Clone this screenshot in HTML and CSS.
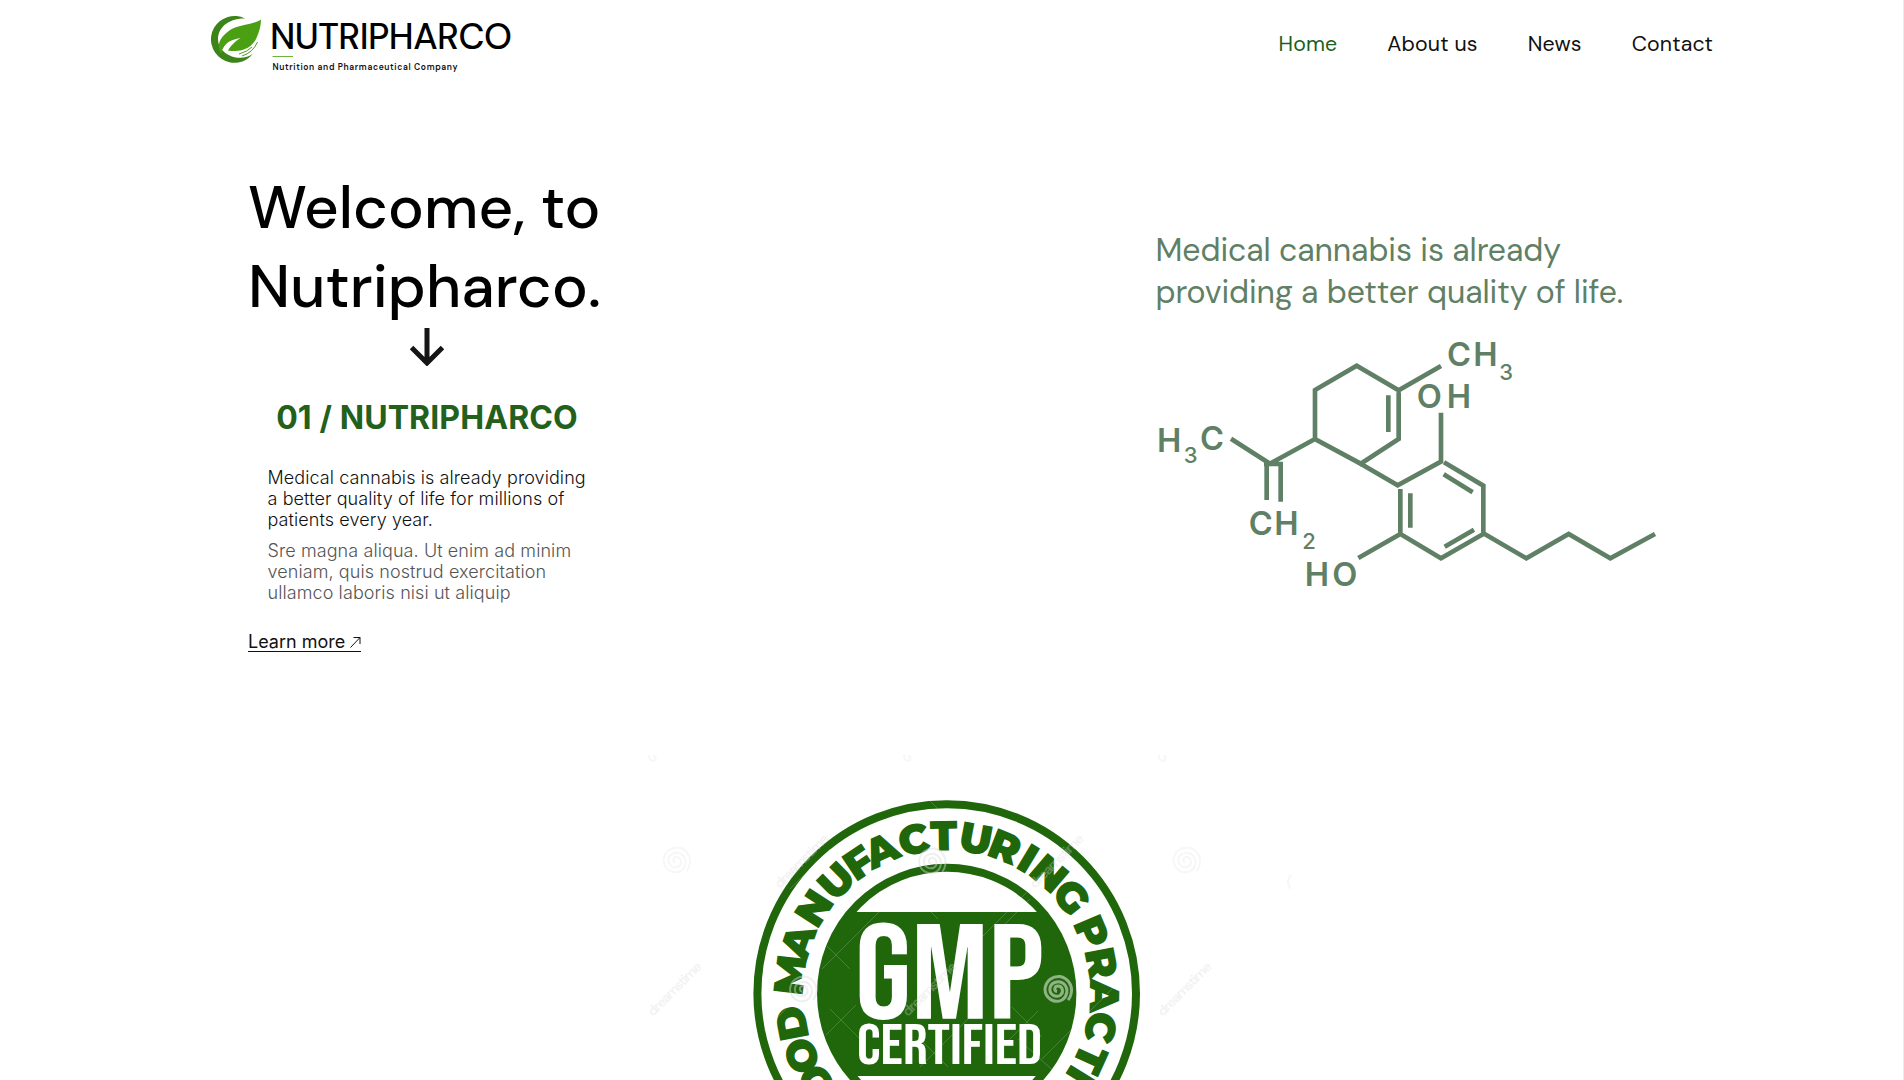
FILE: index.html
```html
<!DOCTYPE html>
<html lang="en">
<head>
<meta charset="utf-8">
<title>Nutripharco</title>
<link rel="stylesheet" href="styles.css">
</head>
<body>
<header class="header">
  <svg class="logo" width="320" height="66" viewBox="0 0 320 66" role="img" aria-label="Nutripharco">
    <path fill="#3c8419" d="M37 8.500A23.400 23.400 0 1 0 45 43.500C36 51 20 48.500 12.500 38C5 25 15 8 37 8.500Z"/>
    <path fill="#4aa012" d="M53 9.500C45.500 15 28.500 14 19.500 22C10.500 29 9 36 13 44C15 36 19 30 32.500 28C27.500 31 22.500 36 20 40.500C34.500 43 44.500 37 48.500 28C51.500 21 53 15 53 9.500Z"/>
    <path class="swoosh" d="M34 46Q45 42.500 49.500 32M31 44Q39 42 44 37"/>
    <text class="logo-name" x="62" y="38.700" textLength="242">NUTRIPHARCO</text>
    <path stroke="#6cb33f" d="M64.500 46.500H85"/>
    <text class="logo-tag" x="64.500" y="59.700" textLength="185">Nutrition and Pharmaceutical Company</text>
  </svg>
  <nav class="nav">
    <a class="nav-link active">Home</a>
    <a class="nav-link">About us</a>
    <a class="nav-link">News</a>
    <a class="nav-link">Contact</a>
  </nav>
</header>
<main>
  <section class="hero">
    <div class="intro">
      <h1 class="title">Welcome, to<br>Nutripharco.</h1>
      <svg class="arrow" width="34" height="38" viewBox="0 0 34 38"><path d="M17 0V35M1.500 19.500L17 35L32.500 19.500"/></svg>
      <h2 class="subtitle">01 / NUTRIPHARCO</h2>
      <p class="lead">Medical cannabis is already providing<br>a better quality of life for millions of<br>patients every year.</p>
      <p class="note">Sre magna aliqua. Ut enim ad minim<br>veniam, quis nostrud exercitation<br>ullamco laboris nisi ut aliquip</p>
      <a class="more">Learn more <svg class="more-icon" width="11" height="12" viewBox="0 0 11 12"><path d="M.5 11.500L10 1.500M3.500 1.500H10V8"/></svg></a>
    </div>
    <div class="science">
      <p class="quote">Medical cannabis is already<br>providing a better quality of life.</p>
      <svg class="molecule" width="520" height="260" viewBox="0 345 1560 780">
        <g class="bonds">
          <path d="M903 438L776 511L650 437L525 510V657L662 731L776 657V517M745 526V636M525 657L390 731L273 656M380 720V840M372 732H429M422 725V845"/>
          <path d="M662 731L773 796L903 725V578M912 727L1030 797V942L903 1015L781 942V807M811 820V923M911 763L998 817M914 980L1002 929M781 942L655 1014M1030 940L1159 1015L1286 942L1411 1015L1545 942"/>
        </g>
        <g class="atoms">
          <text x="921" y="437" textLength="152">CH</text><text class="sub" x="1078" y="480">3</text>
          <text x="830" y="564" textLength="163">OH</text>
          <text x="51" y="695">H</text><text class="sub" x="131" y="730">3</text><text x="180" y="689">C</text>
          <text x="326" y="946" textLength="150">CH</text><text class="sub" x="487" y="986">2</text>
          <text x="494" y="1097" textLength="158">HO</text>
        </g>
      </svg>
    </div>
  </section>
  <section class="certificate">
    <svg class="seal" width="680" height="341" viewBox="0 0 680 341">
      <defs>
        <path id="arc" d="M316.700 397.500A143 143 0 0 1 316.700 111.500A143 143 0 0 1 316.700 397.500"/>
        <path id="spiral" d="M0 1.500C-3 1-3-4 1-4C6-4 7 3 3 5.500C-2 8-8 4-7-2C-6-8 2-10 7-6C12-1 10 7 5 10C-3 14-12 8-12-1C-11-10-4-14 3-13.500C11-12 15-5 14.500 1C14 6 13 8 11 10"/>
        <clipPath id="disc"><circle cx="316.700" cy="254.500" r="128"/></clipPath>
      </defs>
      <circle cx="316.700" cy="254.500" r="189.300" class="ring"/>
      <circle cx="316.700" cy="254.500" r="125.700" class="ring"/>
      <rect clip-path="url(#disc)" x="180" y="173" width="280" height="164" fill="#20670c"/>
      <text class="ring-text"><textPath href="#arc"><tspan x="109.800 138.500 166.500 197.400 215 241.400 272.800 306.300 338 364.400 387.900 418.800 446.300 475.700 503.200 526.700 550.100 579.100 598 616.300 645.700 675.900 704.400 734.600 753 776 803">GOOD MANUFACTURING PRACTICE</tspan></textPath></text>
      <text class="gmp" x="225" y="279.500" textLength="189" lengthAdjust="spacingAndGlyphs">GMP</text>
      <text class="certified" x="227" y="325" textLength="185" lengthAdjust="spacingAndGlyphs">CERTIFIED</text>
      <g class="mark-lines">
        <path d="M192 202L220 230M192 230L238 184L282 140M200 270L230 300M196 296L226 266M288 298L318 328M290 328L330 288L350 268M382 268L412 298M376 304L408 272M286 158L308 180M400 160L372 188M336 214L360 190L400 150M134 292L180 246M412 320L470 262L500 232M160 150L200 110M300 62L318 80M428 336L388 300"/>
      </g>
      <g class="mark faint">
        <use href="#spiral" x="45.500" y="122"/><use href="#spiral" x="555.500" y="122"/>
        <path d="M19 16Q19 24 25 21Q27 17 23 17M274 16Q274 24 280 21Q282 17 278 17M529 16Q529 24 535 21Q537 17 533 17M661 136Q655 143 661 150"/>
      </g>
      <g class="mark">
        <use href="#spiral" x="301" y="123"/><use href="#spiral" x="172" y="251"/>
      </g>
      <use href="#spiral" class="mark strong" x="427" y="251"/>
      <g class="mark-name">
        <text transform="translate(23 278) rotate(-45)" textLength="70">dreamstime</text>
        <text transform="translate(278 278) rotate(-45)" textLength="70">dreamstime</text>
        <text transform="translate(533 278) rotate(-45)" textLength="70">dreamstime</text>
        <text transform="translate(150 150) rotate(-45)" textLength="70">dreamstime</text>
        <text transform="translate(405 150) rotate(-45)" textLength="70">dreamstime</text>
      </g>
    </svg>
  </section>
</main>
</body>
</html>
```
FILE: styles.css
```css
body {
  margin: 0;
  height: 1080px;
  box-sizing: border-box;
  border-right: 1px solid #ececec;
  background: #fff;
  color: #111;
  font-family: Inter, sans-serif;
  overflow: hidden;
}
.header {
  display: flex;
  justify-content: space-between;
  box-sizing: border-box;
  height: 84px;
  padding: 10px 190px 0 208px;
}
.logo-name { font: 500 36px "DM Sans", Lato, sans-serif; fill: #000; }
.logo-tag { font: 600 8.500px "DM Sans", Lato, sans-serif; fill: #111; }
.swoosh { fill: none; stroke: #4aa012; stroke-width: 1; }
.nav {
  display: flex;
  gap: 50px;
  padding-top: 21px;
  font: 400 21.300px/26px "DM Sans", Inter, sans-serif;
  letter-spacing: .15px;
}
.active { color: #1c5f20; }
.hero {
  display: flex;
  justify-content: space-between;
  box-sizing: border-box;
  height: 655px;
  padding: 84px 243px 0 248px;
}
.intro {
  display: flex;
  flex-direction: column;
  align-items: flex-start;
  width: 358px;
}
.title {
  margin: 0;
  color: #000;
  font: 500 60px/79px "DM Sans", Inter, sans-serif;
  letter-spacing: .05px;
  white-space: nowrap;
}
.arrow { align-self: center; margin-top: 2px; }
.arrow path { fill: none; stroke: #151515; stroke-width: 5; }
.subtitle {
  align-self: center;
  margin: 32px 0 0;
  color: #22601c;
  font-size: 32px;
  line-height: 39px;
  letter-spacing: .1px;
}
.lead, .note {
  margin: 29.500px 0 0 19.500px;
  font-size: 18px;
  font-weight: 300;
  line-height: 21px;
  letter-spacing: .09px;
  white-space: nowrap;
}
.note { margin-top: 10px; color: #555; }
.more {
  margin-top: 30.500px;
  font-size: 18px;
  line-height: 18px;
  font-weight: 400;
  border-bottom: 1px solid #111;
}
.more-icon path { fill: none; stroke: #111; stroke-width: 1; }
.science { width: 520px; }
.quote {
  margin: 61px 0 22px;
  padding-left: 15.500px;
  color: #608066;
  font: 400 32px/42px "DM Sans", Inter, sans-serif;
  letter-spacing: -.09px;
}
.molecule { display: block; }
.bonds { fill: none; stroke: #608066; stroke-width: 14; }
.atoms { fill: #608066; font: 600 98px Inter, sans-serif; }
.sub { font-size: 66px; font-weight: 500; }
.certificate { padding-left: 630px; }
.seal { display: block; }
.ring { fill: none; stroke: #20670c; stroke-width: 8; }
.ring-text { font: 900 42px Montserrat, "DM Sans", sans-serif; fill: #20670c; text-anchor: middle; }
.gmp { font: 400 135px "Bebas Neue", Roboto, sans-serif; fill: #fff; }
.certified { font: 400 58px "Bebas Neue", Roboto, sans-serif; fill: #fff; }
.mark-lines { fill: none; stroke: #fff; stroke-width: .6; opacity: .3; }
.mark { fill: none; stroke: #dcdcdc; stroke-width: 2; opacity: .45; }
.faint { opacity: .25; }
.strong { stroke: #fff; stroke-width: 3; opacity: .5; }
.mark-name { font: 500 14px "DM Sans", sans-serif; fill: #d8d8d8; opacity: .4; }
```
